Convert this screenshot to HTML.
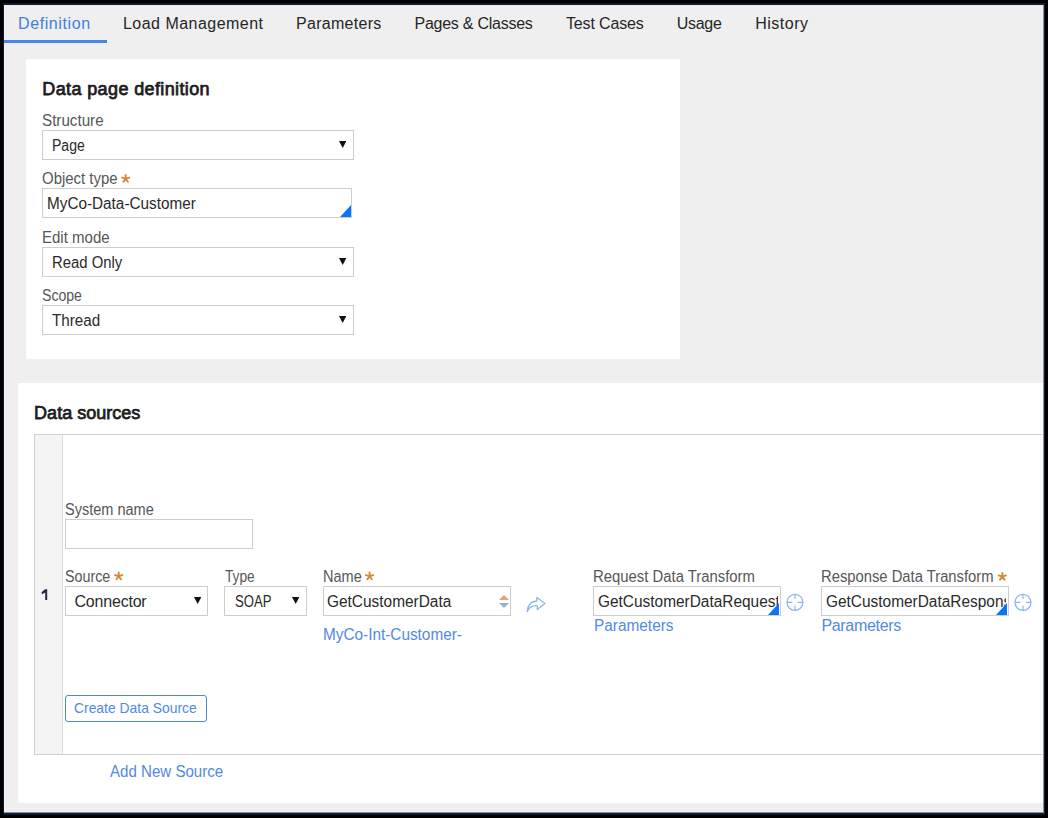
<!DOCTYPE html>
<html><head><meta charset="utf-8"><title>Data page definition</title>
<style>
html,body{margin:0;padding:0;width:1048px;height:818px;overflow:hidden;background:#000;}
body{position:relative;font-family:"Liberation Sans",sans-serif;}
.abs{position:absolute;}
.t{position:absolute;white-space:nowrap;line-height:1.1171875;font-family:"Liberation Sans",sans-serif;}
.clip{position:absolute;overflow:hidden;}
.panel{position:absolute;background:#fff;border-radius:2px;}
.box{position:absolute;box-sizing:border-box;border:1px solid #cdcdcd;background:#fff;}
.tri{position:absolute;width:0;height:0;z-index:3;}
.dd{position:absolute;width:7.4px;height:7px;background:#111;clip-path:polygon(0 0,100% 0,50% 100%);}
.tabline{position:absolute;left:4px;top:40px;width:103px;height:3px;background:#4786e1;}
svg{position:absolute;overflow:visible;}
</style></head>
<body>
<div class="abs" style="left:0;top:0;width:1048px;height:818px;background:#efefef"></div>
<div class="tabline"></div>
<!-- panel 1 -->
<div class="panel" style="left:26px;top:59px;width:654px;height:300px"></div>
<div class="box" style="left:42px;top:130px;width:312px;height:30px"></div>
<div class="dd" style="left:339px;top:141px"></div>
<div class="box" style="left:42px;top:188px;width:310px;height:30px"></div>
<div class="tri" style="left:340px;top:205px;border-left:11px solid transparent;border-bottom:12px solid #0a74fb"></div>
<div class="box" style="left:42px;top:247px;width:312px;height:30px"></div>
<div class="dd" style="left:339px;top:258px"></div>
<div class="box" style="left:42px;top:305px;width:312px;height:30px"></div>
<div class="dd" style="left:339px;top:316px"></div>
<!-- panel 2 -->
<div class="panel" style="left:18px;top:383px;width:1040px;height:420px"></div>
<div class="abs" style="left:34px;top:434px;width:1020px;height:321px;box-sizing:border-box;border:1px solid #d2d2d2;border-right:none;background:#fff"></div>
<div class="abs" style="left:35px;top:435px;width:27px;height:319px;background:#f4f4f4;border-right:1px solid #dedede"></div>
<div class="box" style="left:65px;top:519px;width:188px;height:30px"></div>
<div class="box" style="left:65px;top:586px;width:143px;height:30px"></div>
<div class="dd" style="left:194px;top:597px"></div>
<div class="box" style="left:224px;top:586px;width:83px;height:30px"></div>
<div class="dd" style="left:292px;top:597px"></div>
<div class="box" style="left:323px;top:586px;width:188px;height:30px"></div>
<div class="abs" style="left:499px;top:595px;width:0;height:0;border-left:5px solid transparent;border-right:5px solid transparent;border-bottom:5px solid #d9a677"></div>
<div class="abs" style="left:499px;top:603px;width:0;height:0;border-left:5px solid transparent;border-right:5px solid transparent;border-top:5px solid #94b4cb"></div>
<svg style="left:520px;top:590px" width="32" height="28" viewBox="0 0 32 28"><path d="M7.2 21.6 C7.8 14.5 11.5 11.2 16.8 11 V7.4 L25 13.5 L17.3 19.5 V15.8 C12.5 15.2 9.5 17 7.2 21.6 Z" fill="none" stroke="#8db7f0" stroke-width="1.3" stroke-linejoin="round"/></svg>
<div class="box" style="left:593px;top:586px;width:188px;height:30px"></div>
<div class="tri" style="left:768px;top:603px;border-left:11px solid transparent;border-bottom:12px solid #0a74fb"></div>
<svg style="left:786px;top:593px" width="18" height="18" viewBox="0 0 18 18"><circle cx="9" cy="9.3" r="8" fill="none" stroke="#8fb2ee" stroke-width="1.2"/><path d="M9 1.3V6M9 12.6V17.3M1 9.3H6.3M11.7 9.3H17" stroke="#8fb2ee" stroke-width="1.2"/></svg>
<div class="box" style="left:821px;top:586px;width:188px;height:30px"></div>
<div class="tri" style="left:996px;top:603px;border-left:11px solid transparent;border-bottom:12px solid #0a74fb"></div>
<svg style="left:1014px;top:593px" width="18" height="18" viewBox="0 0 18 18"><circle cx="9" cy="9.3" r="8" fill="none" stroke="#8fb2ee" stroke-width="1.2"/><path d="M9 1.3V6M9 12.6V17.3M1 9.3H6.3M11.7 9.3H17" stroke="#8fb2ee" stroke-width="1.2"/></svg>
<div class="abs" style="left:65px;top:695px;width:142px;height:27px;box-sizing:border-box;border:1px solid #4a86e2;border-radius:3px;background:#fff"></div>
<!-- stars -->
<svg style="left:0;top:0" width="1048" height="818" viewBox="0 0 1048 818"><path d="M125.65 178.70L125.65 174.94M125.65 178.70L129.23 177.54M125.65 178.70L127.86 181.74M125.65 178.70L123.44 181.74M125.65 178.70L122.07 177.54M118.70 576.20L118.70 572.44M118.70 576.20L122.28 575.04M118.70 576.20L120.91 579.24M118.70 576.20L116.49 579.24M118.70 576.20L115.12 575.04M369.60 576.20L369.60 572.44M369.60 576.20L373.18 575.04M369.60 576.20L371.81 579.24M369.60 576.20L367.39 579.24M369.60 576.20L366.02 575.04M1002.30 576.60L1002.30 572.84M1002.30 576.60L1005.88 575.44M1002.30 576.60L1004.51 579.64M1002.30 576.60L1000.09 579.64M1002.30 576.60L998.72 575.44" stroke="#d6873a" stroke-width="1.9" stroke-linecap="round" fill="none"/></svg>
<svg style="left:0;top:0" width="60" height="620" viewBox="0 0 60 620"><path d="M45.0 589.3 H47.2 V599.9 H45.2 V592.5 L42.2 594.2 L41.5 592.3 Z" fill="#262a44"/></svg>
<div class="t" style="left:18.0px;top:14.52px;font-size:16px;font-weight:400;color:#3f7fdf;letter-spacing:0.600px;">Definition</div>
<div class="t" style="left:123.0px;top:14.52px;font-size:16px;font-weight:400;color:#262626;letter-spacing:0.469px;">Load Management</div>
<div class="t" style="left:296.0px;top:14.52px;font-size:16px;font-weight:400;color:#262626;letter-spacing:0.289px;">Parameters</div>
<div class="t" style="left:414.5px;top:14.52px;font-size:16px;font-weight:400;color:#262626;letter-spacing:-0.253px;">Pages &amp; Classes</div>
<div class="t" style="left:566.0px;top:14.52px;font-size:16px;font-weight:400;color:#262626;letter-spacing:-0.149px;">Test Cases</div>
<div class="t" style="left:676.7px;top:14.52px;font-size:16px;font-weight:400;color:#262626;letter-spacing:-0.262px;">Usage</div>
<div class="t" style="left:755.2px;top:14.52px;font-size:16px;font-weight:400;color:#262626;letter-spacing:0.520px;">History</div>
<div class="t" style="left:42.3px;top:78.71px;font-size:18px;font-weight:400;color:#1c1c1c;letter-spacing:0.378px;-webkit-text-stroke:0.75px #1c1c1c;">Data page definition</div>
<div class="t" style="left:41.7px;top:111.52px;font-size:16px;font-weight:400;color:#575757;letter-spacing:0.000px;transform:scaleX(0.9489);transform-origin:0 0;">Structure</div>
<div class="t" style="left:52.3px;top:136.52px;font-size:16px;font-weight:400;color:#2a2a2a;letter-spacing:0.000px;transform:scaleX(0.8778);transform-origin:0 0;">Page</div>
<div class="t" style="left:41.6px;top:169.52px;font-size:16px;font-weight:400;color:#575757;letter-spacing:0.000px;transform:scaleX(0.9341);transform-origin:0 0;">Object type</div>
<div class="t" style="left:46.6px;top:194.52px;font-size:16px;font-weight:400;color:#2a2a2a;letter-spacing:0.000px;transform:scaleX(0.9564);transform-origin:0 0;">MyCo-Data-Customer</div>
<div class="t" style="left:41.7px;top:228.52px;font-size:16px;font-weight:400;color:#575757;letter-spacing:0.000px;transform:scaleX(0.9384);transform-origin:0 0;">Edit mode</div>
<div class="t" style="left:52.3px;top:253.52px;font-size:16px;font-weight:400;color:#2a2a2a;letter-spacing:0.000px;transform:scaleX(0.9286);transform-origin:0 0;">Read Only</div>
<div class="t" style="left:41.7px;top:286.52px;font-size:16px;font-weight:400;color:#575757;letter-spacing:0.000px;transform:scaleX(0.8795);transform-origin:0 0;">Scope</div>
<div class="t" style="left:52.3px;top:311.52px;font-size:16px;font-weight:400;color:#2a2a2a;letter-spacing:0.000px;transform:scaleX(0.9488);transform-origin:0 0;">Thread</div>
<div class="t" style="left:34.1px;top:402.71px;font-size:18px;font-weight:400;color:#1c1c1c;letter-spacing:0.014px;-webkit-text-stroke:0.75px #1c1c1c;">Data sources</div>
<div class="t" style="left:64.7px;top:500.52px;font-size:16px;font-weight:400;color:#575757;letter-spacing:0.000px;transform:scaleX(0.9079);transform-origin:0 0;">System name</div>
<div class="t" style="left:64.7px;top:567.52px;font-size:16px;font-weight:400;color:#575757;letter-spacing:0.000px;transform:scaleX(0.8936);transform-origin:0 0;">Source</div>
<div class="t" style="left:224.6px;top:567.52px;font-size:16px;font-weight:400;color:#575757;letter-spacing:0.000px;transform:scaleX(0.8562);transform-origin:0 0;">Type</div>
<div class="t" style="left:323.1px;top:567.52px;font-size:16px;font-weight:400;color:#575757;letter-spacing:0.000px;transform:scaleX(0.9068);transform-origin:0 0;">Name</div>
<div class="t" style="left:593.1px;top:567.52px;font-size:16px;font-weight:400;color:#575757;letter-spacing:0.000px;transform:scaleX(0.9291);transform-origin:0 0;">Request Data Transform</div>
<div class="t" style="left:821.4px;top:567.52px;font-size:16px;font-weight:400;color:#575757;letter-spacing:0.000px;transform:scaleX(0.9239);transform-origin:0 0;">Response Data Transform</div>
<div class="t" style="left:74.5px;top:592.52px;font-size:16px;font-weight:400;color:#2a2a2a;letter-spacing:-0.203px;">Connector</div>
<div class="t" style="left:234.5px;top:592.52px;font-size:16px;font-weight:400;color:#2a2a2a;letter-spacing:0.000px;transform:scaleX(0.8209);transform-origin:0 0;">SOAP</div>
<div class="t" style="left:327.0px;top:592.52px;font-size:16px;font-weight:400;color:#2a2a2a;letter-spacing:0.000px;transform:scaleX(0.9640);transform-origin:0 0;">GetCustomerData</div>
<div class="t" style="left:323.1px;top:625.52px;font-size:16px;font-weight:400;color:#5289e4;letter-spacing:0.000px;transform:scaleX(0.9586);transform-origin:0 0;">MyCo-Int-Customer-</div>
<div class="t" style="left:593.5px;top:616.52px;font-size:16px;font-weight:400;color:#5289e4;letter-spacing:0.000px;transform:scaleX(0.9614);transform-origin:0 0;">Parameters</div>
<div class="t" style="left:821.4px;top:616.52px;font-size:16px;font-weight:400;color:#5289e4;letter-spacing:-0.311px;">Parameters</div>
<div class="t" style="left:74.1px;top:700.42px;font-size:15px;font-weight:400;color:#5289e4;letter-spacing:0.000px;transform:scaleX(0.9256);transform-origin:0 0;">Create Data Source</div>
<div class="t" style="left:110.3px;top:762.52px;font-size:16px;font-weight:400;color:#5289e4;letter-spacing:0.000px;transform:scaleX(0.9428);transform-origin:0 0;">Add New Source</div>
<div class="clip" style="left:594px;top:588.52px;width:183.5px;height:24px"><div class="t" style="left:4.0px;top:4px;font-size:16px;color:#2a2a2a;transform:scaleX(0.9640);transform-origin:0 0;">GetCustomerDataRequest</div></div>
<div class="clip" style="left:822px;top:588.52px;width:183.5px;height:24px"><div class="t" style="left:4.3px;top:4px;font-size:16px;color:#2a2a2a;transform:scaleX(0.9640);transform-origin:0 0;">GetCustomerDataResponse</div></div>
<div class="abs" style="left:0;top:0;width:1048px;height:5px;background:#000;z-index:10"></div>
<div class="abs" style="left:3px;top:3px;width:1042px;height:2px;background:#0b1d38;z-index:10"></div>
<div class="abs" style="left:0;top:0;width:4px;height:818px;background:#000;z-index:10"></div>
<div class="abs" style="left:3px;top:3px;width:1px;height:812px;background:#0b1d38;z-index:10"></div>
<div class="abs" style="left:1043px;top:5px;width:1px;height:808px;background:#8a93a0;z-index:10"></div>
<div class="abs" style="left:1044px;top:0;width:4px;height:818px;background:#000;z-index:10"></div>
<div class="abs" style="left:1044px;top:3px;width:1px;height:812px;background:#0b1d38;z-index:10"></div>
<div class="abs" style="left:4px;top:812px;width:1040px;height:1px;background:#8a93a0;z-index:10"></div>
<div class="abs" style="left:0;top:813px;width:1048px;height:5px;background:#000;z-index:10"></div>
<div class="abs" style="left:3px;top:813px;width:1042px;height:2px;background:#0b1d38;z-index:10"></div>
</body></html>
